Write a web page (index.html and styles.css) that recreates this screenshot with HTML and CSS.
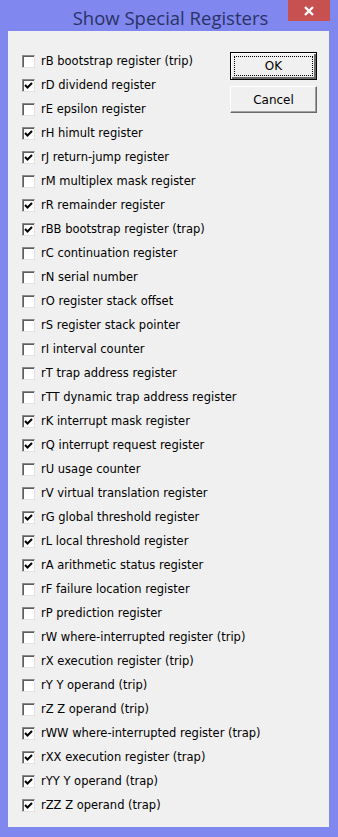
FILE: index.html
```html
<!DOCTYPE html>
<html lang="en">
<head>
    <meta charset="UTF-8">
    <title>Show Special Registers</title>
    <link rel="stylesheet" href="styles.css">
</head>
<body>
<div class="window">
    <div class="titlebar">
        <span class="title">Show Special Registers</span>
        <span class="close">
            <svg width="12" height="10" viewBox="0 0 12 10"><path d="M2 1 L10 9 M10 1 L2 9" stroke="#fff" stroke-width="2.4"/></svg>
        </span>
    </div>

    <div class="client">
        <ul class="reg-list" id="regList"></ul>

        <div class="buttons">
            <button class="btn default"><span class="focus">OK</span></button>
            <button class="btn">Cancel</button>
        </div>
    </div>
</div>

<script>
    // name, description, checked
    const registers = [
        ['rB', 'bootstrap register (trip)', 0],
        ['rD', 'dividend register', 1],
        ['rE', 'epsilon register', 0],
        ['rH', 'himult register', 1],
        ['rJ', 'return-jump register', 1],
        ['rM', 'multiplex mask register', 0],
        ['rR', 'remainder register', 1],
        ['rBB', 'bootstrap register (trap)', 1],
        ['rC', 'continuation register', 0],
        ['rN', 'serial number', 0],
        ['rO', 'register stack offset', 0],
        ['rS', 'register stack pointer', 0],
        ['rI', 'interval counter', 0],
        ['rT', 'trap address register', 0],
        ['rTT', 'dynamic trap address register', 0],
        ['rK', 'interrupt mask register', 1],
        ['rQ', 'interrupt request register', 1],
        ['rU', 'usage counter', 0],
        ['rV', 'virtual translation register', 0],
        ['rG', 'global threshold register', 1],
        ['rL', 'local threshold register', 1],
        ['rA', 'arithmetic status register', 1],
        ['rF', 'failure location register', 0],
        ['rP', 'prediction register', 0],
        ['rW', 'where-interrupted register (trip)', 0],
        ['rX', 'execution register (trip)', 0],
        ['rY', 'Y operand (trip)', 0],
        ['rZ', 'Z operand (trip)', 0],
        ['rWW', 'where-interrupted register (trap)', 1],
        ['rXX', 'execution register (trap)', 1],
        ['rYY', 'Y operand (trap)', 1],
        ['rZZ', 'Z operand (trap)', 1],
    ];

    const check = '<svg width="11" height="11" viewBox="0 0 11 11"><path d="M2 5 L4.5 7.5 L9 3" fill="none" stroke="#000" stroke-width="2"/></svg>';

    const list = document.getElementById('regList');
    registers.forEach(([name, desc, on]) => {
        const li = document.createElement('li');
        li.className = 'reg';
        li.innerHTML = `<span class="box">${on ? check : ''}</span><span class="label">${name} ${desc}</span>`;
        li.addEventListener('click', () => {
            const box = li.querySelector('.box');
            box.innerHTML = box.innerHTML ? '' : check;
        });
        list.appendChild(li);
    });
</script>
</body>
</html>
```

FILE: styles.css
```css
* {
    margin: 0;
    padding: 0;
    box-sizing: border-box;
}

body {
    width: 338px;
    height: 837px;
    overflow: hidden;
    font-family: "DejaVu Sans", Tahoma, sans-serif;
    font-size: 11.5px;
    color: #000;
}

.window {
    width: 338px;
    height: 837px;
    background-color: #8088ef;
    display: flex;
    flex-direction: column;
    padding: 0 9px 10px 8px;
}

.titlebar {
    height: 31px;
    flex-shrink: 0;
    display: flex;
    justify-content: center;
    align-items: center;
    position: relative;
}

.title {
    font-family: "Open Sans", "Noto Sans", sans-serif;
    font-size: 18.5px;
    color: #2b3266;
    margin-top: 3px;
    margin-left: 4px;
}

.close {
    position: absolute;
    top: 0;
    right: -1px;
    width: 42px;
    height: 21px;
    background-color: #c75050;
    display: flex;
    justify-content: center;
    align-items: center;
}

.client {
    flex: 1;
    background-color: #f0f0f0;
    display: flex;
    padding: 18px 12px 0 14px;
}

.reg-list {
    list-style: none;
    flex: 1;
    min-width: 0;
}

.reg {
    height: 24px;
    display: flex;
    align-items: center;
    cursor: default;
}

.box {
    width: 13px;
    height: 13px;
    background-color: #fff;
    border: 1px solid;
    border-color: #8a8a8a #e3e3e3 #e3e3e3 #8a8a8a;
    box-shadow: inset 1px 1px 0 #5e5e5e;
    display: flex;
    justify-content: center;
    align-items: center;
    margin-right: 6px;
    flex-shrink: 0;
}

.label {
    white-space: nowrap;
}

.buttons {
    width: 87px;
    flex-shrink: 0;
    display: flex;
    flex-direction: column;
    gap: 6px;
    margin-top: 3px;
}

.btn {
    height: 27px;
    font-family: inherit;
    font-size: 12px;
    color: #000;
    background-color: #f0f0f0;
    border: 1px solid;
    border-color: #fff #696969 #696969 #fff;
    box-shadow: inset -1px -1px 0 #a0a0a0;
    display: flex;
    justify-content: center;
    align-items: center;
}

.btn.default {
    height: 28px;
    border: 1px solid #000;
    box-shadow: inset 1px 1px 0 #fff, inset -2px -2px 0 #696969;
    padding: 3px;
}

.focus {
    width: 100%;
    height: 100%;
    border: 1px dotted #000;
    display: flex;
    justify-content: center;
    align-items: center;
}
```
